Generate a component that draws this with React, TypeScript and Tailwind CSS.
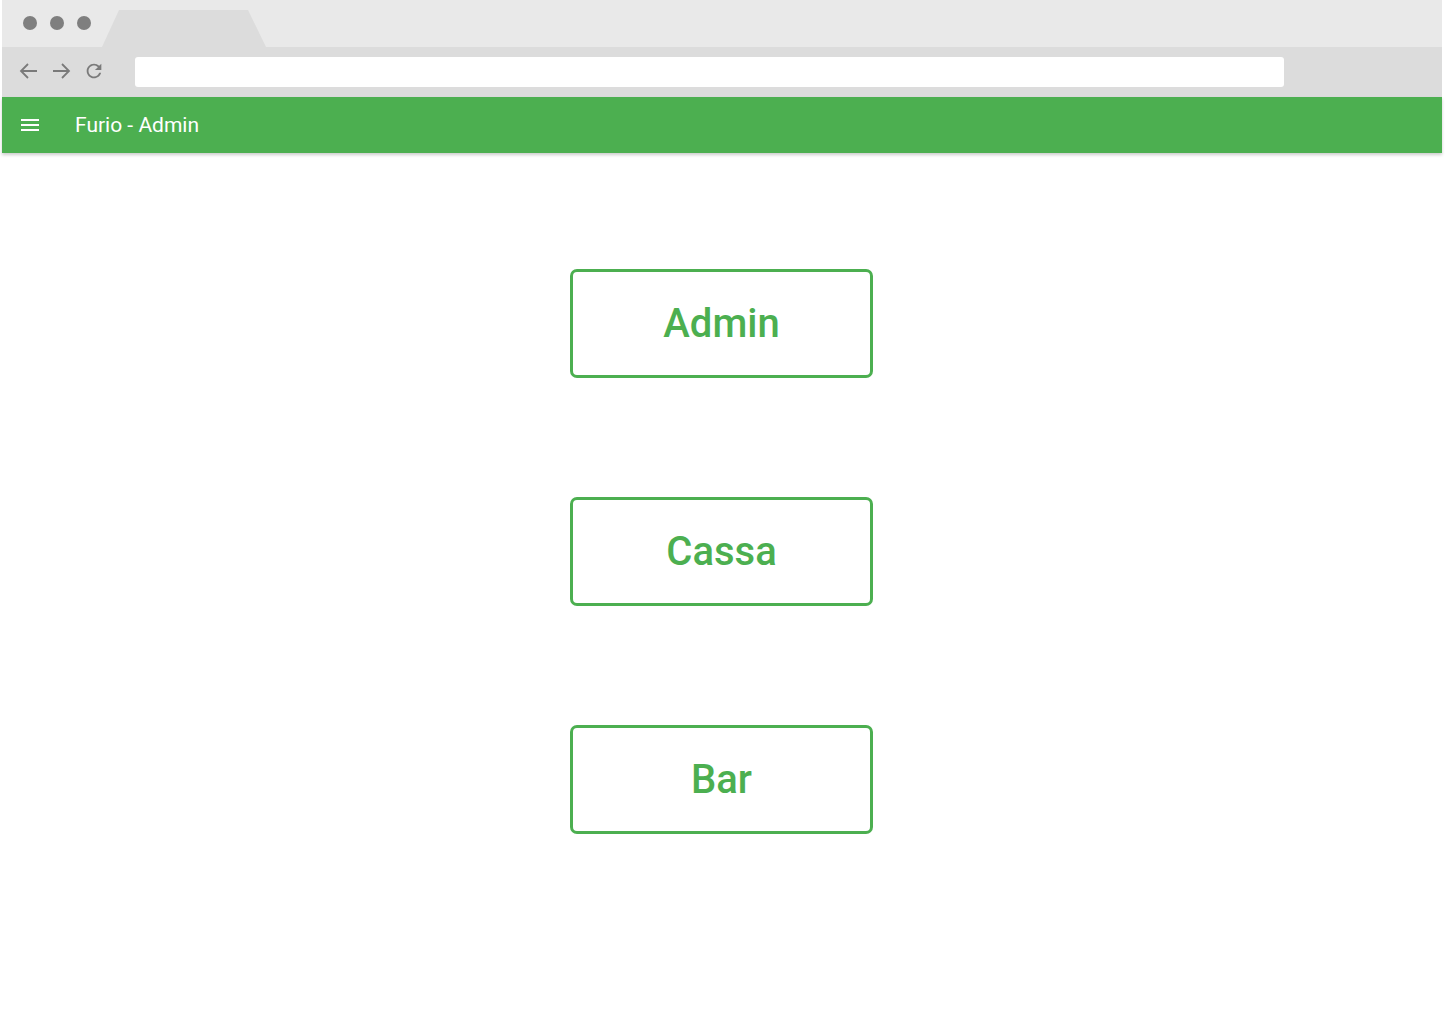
import React from "react";

function Btn({ label }: { label: string }) {
  return (
    <button className="w-[303px] h-[109px] border-[3px] border-[#4caf50] rounded-[7px] bg-white text-[#4caf50] text-[40px] font-medium leading-none flex items-center justify-center" style={{ fontFamily: "Roboto, sans-serif" }}>
      {label}
    </button>
  );
}

export default function App() {
  return (
    <div className="w-[1445px] h-[1024px] bg-white" style={{ fontFamily: "Roboto, sans-serif" }}>
      <div className="ml-[2px] w-[1440px] h-[1024px] flex flex-col">
        {/* tab strip */}
        <div className="h-[47px] bg-[#e9e9e9] relative flex items-start">
          <div className="flex gap-[13px] pl-[21px] pt-[16px]">
            <div className="w-[14px] h-[14px] rounded-full bg-[#7f7f7f]" />
            <div className="w-[14px] h-[14px] rounded-full bg-[#7f7f7f]" />
            <div className="w-[14px] h-[14px] rounded-full bg-[#7f7f7f]" />
          </div>
          <svg className="absolute left-[100px] top-[10px]" width="166" height="37" viewBox="0 0 166 37">
            <polygon points="17,0 146,0 164,37 0,37" fill="#dcdcdc" />
          </svg>
        </div>
        {/* toolbar */}
        <div className="h-[50px] bg-[#dcdcdc] flex items-center">
          <div className="flex items-center pl-[15px] gap-[8px] text-[#7a7a7a] -mt-[2px]">
            <svg width="24" height="24" viewBox="0 0 24 24" fill="none" stroke="currentColor" strokeWidth="1.8">
              <path d="M20 12H5M11 5l-7 7 7 7" />
            </svg>
            <svg width="24" height="24" viewBox="0 0 24 24" fill="none" stroke="currentColor" strokeWidth="1.8">
              <path d="M4 12h15M13 5l7 7-7 7" />
            </svg>
            <svg width="22" height="22" viewBox="0 0 24 24" className="ml-[2px]">
              <path fill="currentColor" d="M17.65 6.35A7.958 7.958 0 0 0 12 4c-4.42 0-7.99 3.58-7.99 8s3.57 8 7.99 8c3.730 0 6.84-2.55 7.73-6h-2.08A5.990 5.990 0 0 1 12 18c-3.31 0-6-2.69-6-6s2.69-6 6-6c1.66 0 3.14.69 4.22 1.78L13 11h7V4l-2.35 2.35z" />
            </svg>
          </div>
          <div className="ml-[30px] w-[1149px] h-[30px] bg-white rounded-[3px]" />
        </div>
        {/* app bar */}
        <div className="h-[56px] bg-[#4caf50] flex items-center shadow-[0_2px_3px_rgba(0,0,0,0.2)] relative z-10">
          <svg className="ml-[19px]" width="18" height="14" viewBox="0 0 18 14">
            <rect x="0" y="1" width="18" height="2" fill="white" />
            <rect x="0" y="6" width="18" height="2" fill="white" />
            <rect x="0" y="11" width="18" height="2" fill="white" />
          </svg>
          <span className="ml-[36px] text-white text-[21px] leading-none">Furio - Admin</span>
        </div>
        {/* content */}
        <div className="flex flex-col items-center pt-[116px] gap-[119px] -ml-[1px]">
          <Btn label="Admin" />
          <Btn label="Cassa" />
          <Btn label="Bar" />
        </div>
      </div>
    </div>
  );
}
